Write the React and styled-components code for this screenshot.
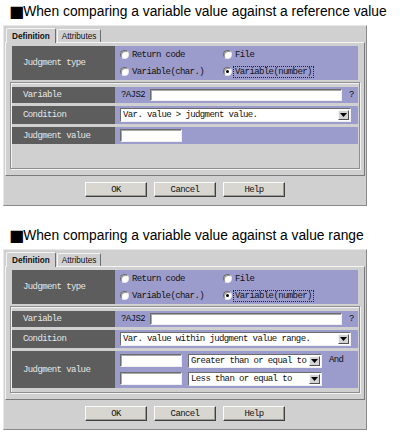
import React from "react";
import styled, { createGlobalStyle } from "styled-components";

const GlobalStyle = createGlobalStyle`
  html, body {
    margin: 0;
    padding: 0;
    background: #ffffff;
  }
  body {
    font-family: "Liberation Sans", Arial, sans-serif;
  }
`;

const Page = styled.div`
  width: 400px;
  height: 432px;
  padding-top: 4px;
  box-sizing: border-box;
  overflow: hidden;
`;

const Section = styled.section`
  & + & {
    margin-top: 22px;
  }
`;

const Heading = styled.h2`
  margin: 0 0 5px;
  padding-left: 9px;
  height: 16px;
  font: 400 13.8px/16px "Liberation Sans", Arial, sans-serif;
  color: #000;
  white-space: nowrap;
`;

const Mark = styled.span`
  font-family: "DejaVu Sans", sans-serif;
  font-size: 16px;
  line-height: 16px;
  vertical-align: top;
  margin-right: -1px;
`;

const Dialog = styled.div`
  margin-left: 3px;
  width: 364px;
  height: 181px;
  box-sizing: border-box;
  background: #d0d0d0;
  border: 1px solid;
  border-color: #e8e8e8 #8a8a8a #8a8a8a #e8e8e8;
  padding: 0 1px;
  display: flex;
  flex-direction: column;
`;

const TabStrip = styled.div`
  height: 16px;
  display: flex;
  align-items: flex-end;
  padding-left: 1px;
`;

const Tab = styled.div`
  position: relative;
  z-index: ${(p) => (p.$active ? 2 : 1)};
  height: ${(p) => (p.$active ? "15px" : "13px")};
  margin-bottom: ${(p) => (p.$active ? "-1px" : "0")};
  margin-left: ${(p) => (p.$active ? "0" : "1px")};
  padding: 0 ${(p) => (p.$active ? "5px" : "4px")};
  box-sizing: border-box;
  background: #d0d0d0;
  border: 1px solid;
  border-bottom: none;
  border-color: #f4f4f4 #6e6e6e #6e6e6e #f4f4f4;
  border-radius: 2px 2px 0 0;
  display: flex;
  align-items: center;
  font: ${(p) => (p.$active ? 700 : 400)} 8.2px "Liberation Sans", Arial, sans-serif;
  color: #111;
`;

const Panel = styled.div`
  flex: 1;
  border: 1px solid;
  border-color: #f4f4f4 #7a7a7a #7a7a7a #f4f4f4;
  padding: 3px 4px 6px;
  display: flex;
  flex-direction: column;
  gap: 2px;
  font: 400 9px "Liberation Mono", "Courier New", monospace;
  letter-spacing: -0.6px;
  color: #111;
`;

const Grid = styled.div`
  display: grid;
  grid-template-columns: 103px 1fr;
  height: ${(p) => p.$h}px;
`;

const TypeRow = styled(Grid)`
  margin: 0 2px;
`;

const Group = styled.div`
  flex: 1;
  border: 1px solid #8e8e8e;
  box-shadow: inset 1px 1px 0 #f2f2f2, 1px 1px 0 #f2f2f2;
  padding: 4px 1px 4px;
  display: flex;
  flex-direction: column;
  gap: 3px;
`;

const Label = styled.div`
  background: #5d5d5d;
  color: #e6e6e6;
  padding-left: 11px;
  display: flex;
  align-items: center;
  white-space: pre;
`;

const Cell = styled.div`
  background: #9c9ccc;
  padding-left: 5px;
  display: flex;
  align-items: ${(p) => (p.$top ? "flex-start" : "center")};
  white-space: pre;
`;

const RadioGrid = styled.div`
  display: grid;
  grid-template-columns: 103px 103px;
  grid-auto-rows: 17px;
  align-items: center;
`;

const RadioItem = styled.div`
  display: flex;
  align-items: center;
  white-space: pre;
`;

const Radio = styled.span`
  position: relative;
  width: 9px;
  height: 9px;
  margin-right: 2px;
  box-sizing: border-box;
  border-radius: 50%;
  background: #ffffff;
  border: 1px solid;
  border-color: #6a6a6a #e8e8e8 #e8e8e8 #6a6a6a;
  box-shadow: inset 1px 1px 0 #9a9a9a;

  &::after {
    content: "";
    display: ${(p) => (p.$checked ? "block" : "none")};
    position: absolute;
    left: 2px;
    top: 2px;
    width: 3px;
    height: 3px;
    border-radius: 50%;
    background: #000;
  }
`;

const RadioText = styled.span`
  padding: 0 1px;
  outline: ${(p) => (p.$focused ? "1px dotted #222" : "none")};
  line-height: 10px;
`;

const Prefix = styled.span`
  width: 29px;
  padding-left: 1px;
`;

const TextBox = styled.div`
  width: ${(p) => p.$w}px;
  height: ${(p) => p.$h || 13}px;
  box-sizing: border-box;
  background: #fff;
  border: 1px solid;
  border-color: #6c6c6c #f0f0f0 #f0f0f0 #6c6c6c;
  box-shadow: inset 1px 1px 0 #a8a8a8;
`;

const Hint = styled.span`
  margin-left: 7px;
`;

const Select = styled.div`
  width: ${(p) => p.$w}px;
  height: 14px;
  box-sizing: border-box;
  background: #fff;
  border: 1px solid;
  border-color: #6c6c6c #f0f0f0 #f0f0f0 #6c6c6c;
  display: flex;
  align-items: center;
  padding: 0 1px 0 2px;
`;

const SelectText = styled.span`
  flex: 1;
  overflow: hidden;
`;

const ArrowButton = styled.span`
  width: 11px;
  height: 10px;
  box-sizing: border-box;
  background: #d4d4d4;
  border: 1px solid;
  border-color: #f6f6f6 #505050 #505050 #f6f6f6;
  display: flex;
  align-items: center;
  justify-content: center;
`;

const RangeGrid = styled.div`
  display: grid;
  grid-template-columns: 62px 134px auto;
  grid-template-rows: 14px 14px;
  column-gap: 6px;
  row-gap: 4px;
  align-items: center;
`;

const AndText = styled.span`
  padding-left: 1px;
  align-self: start;
  padding-top: 1px;
`;

const ButtonBar = styled.div`
  height: 29px;
  display: flex;
  justify-content: center;
  gap: 7px;
  padding-top: 6px;
  box-sizing: border-box;
`;

const Button = styled.div`
  width: 62px;
  height: 15px;
  box-sizing: border-box;
  background: #d8d6d0;
  border: 1px solid;
  border-color: #fafafa #404040 #404040 #fafafa;
  box-shadow: inset -1px -1px 0 #9a9a9a;
  display: flex;
  align-items: center;
  justify-content: center;
  font: 400 9px "Liberation Mono", "Courier New", monospace;
  letter-spacing: -0.6px;
  color: #111;
`;

const Arrow = () => (
  <svg width="7" height="4" viewBox="0 0 7 4">
    <path d="M0 0h7L3.5 4z" fill="#000" />
  </svg>
);

const Dropdown = ({ width, text }) => (
  <Select $w={width}>
    <SelectText>{text}</SelectText>
    <ArrowButton>
      <Arrow />
    </ArrowButton>
  </Select>
);

const radios = [
  { text: "Return code" },
  { text: "File" },
  { text: "Variable(char.)" },
  { text: "Variable(number)", checked: true },
];

const JudgmentDialog = ({ condition, range }) => (
  <Dialog>
    <TabStrip>
      <Tab $active>Definition</Tab>
      <Tab>Attributes</Tab>
    </TabStrip>
    <Panel>
      <TypeRow $h={34}>
        <Label>Judgment type</Label>
        <Cell>
          <RadioGrid>
            {radios.map((r) => (
              <RadioItem key={r.text}>
                <Radio $checked={r.checked} />
                <RadioText $focused={r.checked}>{r.text}</RadioText>
              </RadioItem>
            ))}
          </RadioGrid>
        </Cell>
      </TypeRow>
      <Group>
        <Grid $h={16}>
          <Label>Variable</Label>
          <Cell>
            <Prefix>?AJS2</Prefix>
            <TextBox $w={192} $h={12} />
            <Hint>?</Hint>
          </Cell>
        </Grid>
        <Grid $h={18}>
          <Label>Condition</Label>
          <Cell>
            <Dropdown width={231} text={condition} />
          </Cell>
        </Grid>
        {range ? (
          <Grid $h={37}>
            <Label>Judgment value</Label>
            <Cell>
              <RangeGrid>
                <TextBox $w={62} />
                <Dropdown width={134} text="Greater than or equal to" />
                <AndText>And</AndText>
                <TextBox $w={62} />
                <Dropdown width={134} text="Less than or equal to" />
              </RangeGrid>
            </Cell>
          </Grid>
        ) : (
          <Grid $h={17}>
            <Label>Judgment value</Label>
            <Cell>
              <TextBox $w={62} />
            </Cell>
          </Grid>
        )}
      </Group>
    </Panel>
    <ButtonBar>
      <Button>OK</Button>
      <Button>Cancel</Button>
      <Button>Help</Button>
    </ButtonBar>
  </Dialog>
);

export default function App() {
  return (
    <Page>
      <GlobalStyle />
      <Section>
        <Heading>
          <Mark>■</Mark>When comparing a variable value against a reference value
        </Heading>
        <JudgmentDialog condition="Var. value > judgment value." />
      </Section>
      <Section>
        <Heading>
          <Mark>■</Mark>When comparing a variable value against a value range
        </Heading>
        <JudgmentDialog condition="Var. value within judgment value range." range />
      </Section>
    </Page>
  );
}
